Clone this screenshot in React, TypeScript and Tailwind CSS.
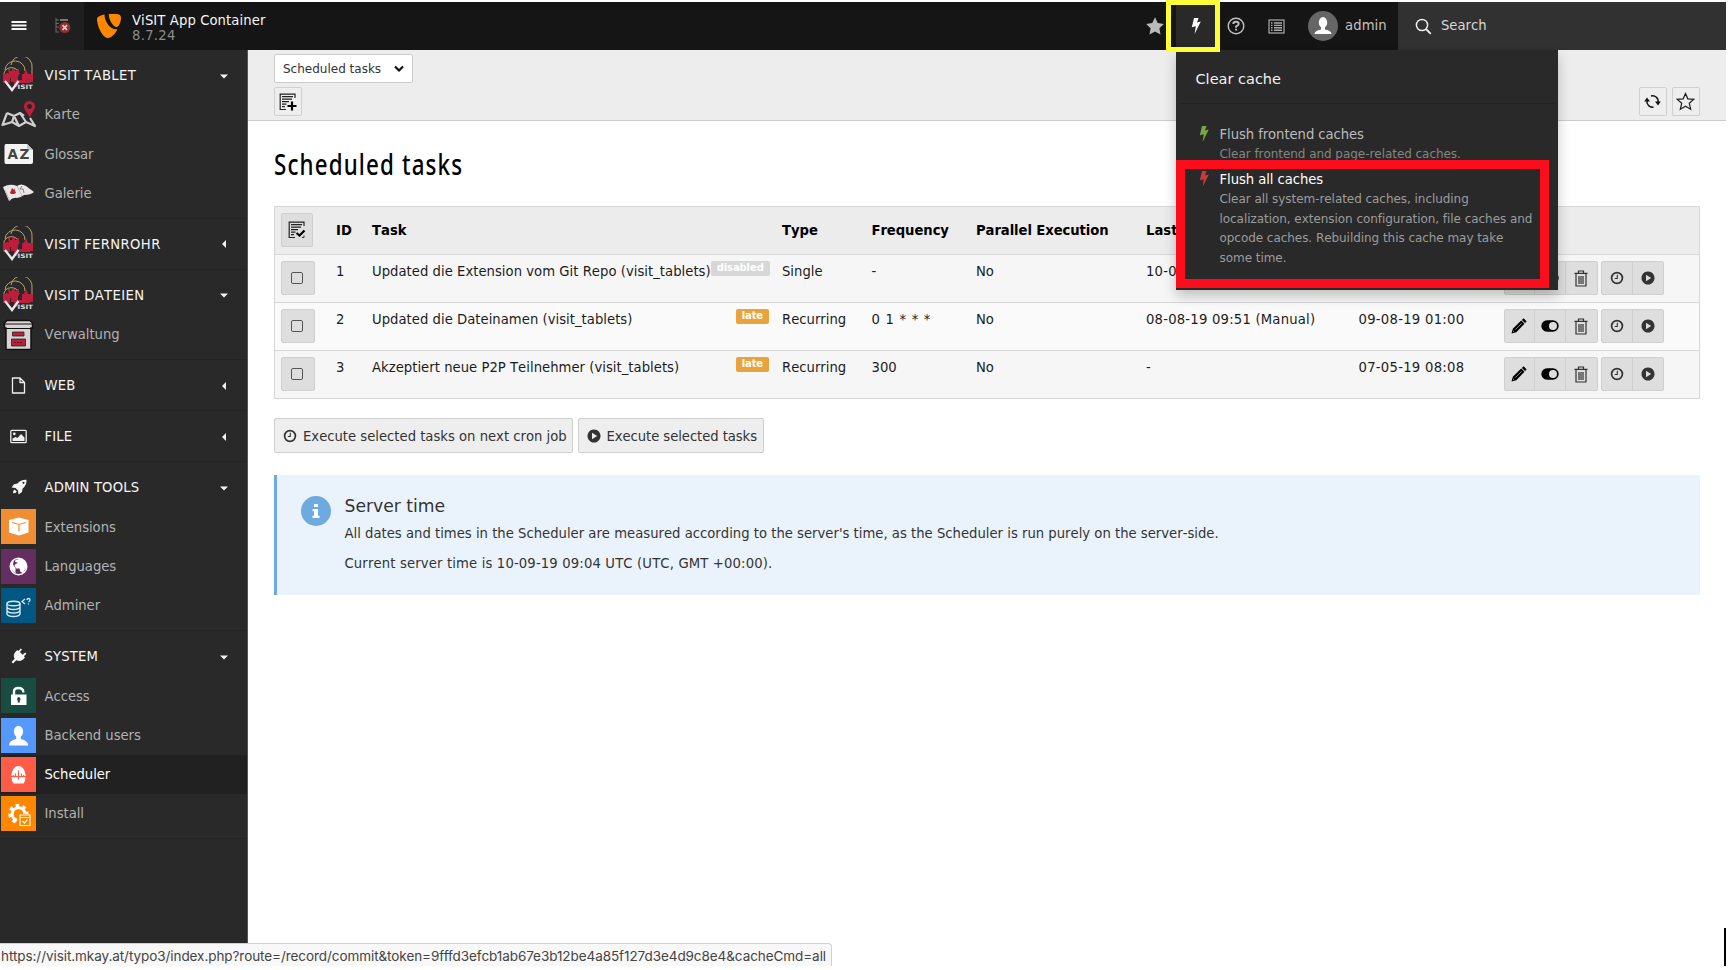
import React from "react";

type IconProps = { className?: string };

const Bolt = ({ className }: IconProps) => (
  <svg className={className} viewBox="0 0 10 16">
    <path fill="currentColor" d="M3 0H7.600L6 4.400L9.800 3.600L3.600 16L4.800 8.200L.800 9.200Z" />
  </svg>
);

const Typo3Logo = () => (
  <svg className="h-[24px] w-[24px]" viewBox="0 0 24 24">
    <path fill="#ff8700" d="M7.600 .600C3.500 1.300 0 2.800 0 5.200C0 11.500 5.500 24 11 24C14 24 18.500 19.500 20.500 15.200C13.500 16.800 7 7 7.600 .600ZM11.800 0H18.500C22.500 .100 24 1.300 24 3.800C24 8 21.800 13 19.600 13C16 13 11.500 5.500 11.800 0Z" />
  </svg>
);

const VisitLogo = () => (
  <svg className="ml-[-1px] h-[36px] w-[32px]" viewBox="0 0 32 36">
    <g fill="none" stroke="#b9a468" strokeWidth="1">
      <path d="M1.500 18A8 9 0 0 1 17 17" />
      <path d="M3 13A10 9.500 0 0 1 23 14" />
      <path d="M9 8A10.500 10.500 0 0 1 30 11V20" />
    </g>
    <path fill="#be1e3c" d="M6 12h2v2h2v-2h3v2h2v-2h2v6l-1 1v4h4v-3l2-3l2-5l2 5l2 1v8H16v4h-4v-5H9v-4H6v3l-5-2v-6l1 1h2v-1h2l1 1z" />
    <path fill="#be1e3c" d="M1 19l2 1h2v-1h3v7H1zM20 17h11v8H20z" />
    <path fill="none" stroke="#e8e8e8" strokeWidth="2.300" d="M3 24L10 33L16.500 24" />
    <text x="15.500" y="32" fill="#dedede" fontSize="6" fontWeight="700" fontFamily="DejaVu Sans, sans-serif" textLength="15.500" lengthAdjust="spacingAndGlyphs">ISIT</text>
  </svg>
);

const MapIcon = () => (
  <svg className="h-[30px] w-[35px]" viewBox="0 0 35 30">
    <path d="M6 13L1.500 25L11 22L18 26L25 22L34 26L29 18M6 13L13 16L19 13L23 16M13 16L11 22M13 16L18 26M19 13L25 22" fill="none" stroke="#cfcfcf" strokeWidth="2.200" strokeLinejoin="round" />
    <path fill="#be1e3c" fillRule="evenodd" d="M28.500 1A5.500 5.500 0 0 1 34 6.500C34 10 30 13 29.200 18C26.500 13 23 10 23 6.500A5.500 5.500 0 0 1 28.500 1ZM28.500 4a2.500 2.500 0 1 0 .01 0Z" />
  </svg>
);

const GlossaryIcon = () => (
  <svg className="h-[22px] w-[30px]" viewBox="0 0 30 22">
    <path fill="#f4f4f4" d="M2 1H23L29 7V19Q29 21 27 21H2Q.500 21 .500 19V3Q.500 1 2 1Z" />
    <path fill="#c9c9c9" d="M23 1L29 7H23Z" />
    <text x="3.500" y="16" fontSize="13.500" fontWeight="700" fill="#444" fontFamily="DejaVu Sans, sans-serif" letterSpacing="1.500">AZ</text>
  </svg>
);

const GalleryIcon = () => (
  <svg className="h-[20px] w-[33px]" viewBox="0 0 33 20">
    <path fill="#ece7e7" d="M1 4Q8 0 15 3Q19 0 24 3L32 9Q29 12 22 12Q18 15 15 15Q11 14 7 18Z" />
    <path fill="none" stroke="#b5aeae" strokeWidth=".8" d="M15 3L20 13M3 7L8 18" />
    <path fill="#be1e3c" d="M8 10L10 5L12 7V5L14 10L12 11H9Z" />
    <path fill="none" stroke="#777" strokeWidth=".9" d="M20 3l-2 3l3 0l1 4" />
  </svg>
);

const ArchiveIcon = () => (
  <svg className="h-[32px] w-[31px]" viewBox="0 0 31 32">
    <path fill="#d8d4d4" stroke="#111" strokeWidth="1.500" d="M4 1.500H27L29.500 4V9H28V29.500Q28 30.500 27 30.500H4Q3 30.500 3 29.500V9H1.500V4Z" />
    <path stroke="#111" strokeWidth="1.200" d="M2 5H29M3 9.500H28" />
    <path fill="#be1e3c" stroke="#222" strokeWidth=".8" d="M9.500 13H21V17H9.500ZM8.500 20H22.500V27H8.500Z" />
    <path stroke="#4d1220" strokeWidth="1.200" strokeDasharray="2 1" d="M11 23.500H20" />
  </svg>
);

const PageIcon = () => (
  <svg className="h-[17px] w-[15px]" viewBox="0 0 15 17">
    <path fill="none" stroke="#efefef" strokeWidth="1.300" strokeLinejoin="round" d="M1.500 1H9L13.500 5.500V16H1.500ZM9 1V5.500H13.500" />
  </svg>
);

const ImageIcon = () => (
  <svg className="h-[15px] w-[17px]" viewBox="0 0 17 15">
    <rect x=".8" y="1.300" width="15.400" height="12.400" rx="1" fill="none" stroke="#efefef" strokeWidth="1.300" />
    <circle cx="4.300" cy="4.800" r="1.400" fill="#efefef" />
    <path fill="#efefef" d="M2.500 12V9.500L5.500 8L7.500 9L11 5L14.500 8.500V12Z" />
  </svg>
);

const RocketIcon = () => (
  <svg className="h-[16px] w-[16px]" viewBox="0 0 16 16">
    <path fill="#f4f4f4" fillRule="evenodd" d="M15.500.800C15.500 5 14.500 7 11.500 9.800L11 13L7.500 15.500L7 11.500L4.500 9L.500 8.500L3 5.200L6.500 4.600C9 1.600 11.500.600 15.500.800ZM12.500 2.700a1 1 0 1 0 .01 0ZM3.500 10.500L5.800 12.500L4.500 14L2 14.300L2.300 12Z" />
  </svg>
);

const PlugIcon = () => (
  <svg className="h-[16px] w-[16px]" viewBox="0 0 16 16">
    <path fill="#f4f4f4" d="M9.700.500L11 1.600L8.900 4L11.600 6.800L14.200 4.500L15.400 5.800L12.900 8.200L14 9.300C11.500 13 8.500 14 5.300 12.300L2 15.500L.500 14L3.700 10.800C2 7.800 3 4.500 6.500 2L7.600 3Z" />
  </svg>
);

const tiles: Record<string, React.ReactNode> = {
  box: (
    <>
      <path fill="#fff" d="M18 8.500L27.500 11V23.500L18 26.500L8 23.500V11Z" />
      <path fill="none" stroke="#f18e33" strokeWidth="1.200" d="M11 13.500L18 15.500L25 13.500M18 15.500V22.500" />
    </>
  ),
  globe: (
    <>
      <circle cx="17.500" cy="17.500" r="8.300" fill="none" stroke="#fff" strokeWidth="1.400" />
      <path fill="#fff" d="M14.500 11L20 9.500L24.500 13L25.500 18L22 24L19.500 23L18.500 19.500H15L13.500 16L17 13.500L14 13ZM9.500 14L13 10L12 15.500L14.500 19V24.500L10 20.500Z" />
    </>
  ),
  database: (
    <>
      <g fill="none" stroke="#dbe9f2" strokeWidth="1.400">
        <ellipse cx="12.500" cy="15.500" rx="6.500" ry="2.300" />
        <path d="M6 15.500V26Q7 28.500 12.500 28.500T19 26V15.500M6 19Q7 21.500 12.500 21.500T19 19M6 22.500Q7 25 12.500 25T19 22.500" />
        <path d="M24 11L21 13.500L24 16M26 12Q26 10.500 27.500 10.500T29 12Q29 13 27.500 14M27.500 15.500V16.500" strokeWidth="1.300" />
      </g>
    </>
  ),
  lock: (
    <>
      <path fill="none" stroke="#fff" strokeWidth="2.400" d="M13 17V13.500Q13 10 17.500 10T22.300 13.800V14.500" />
      <path fill="#fff" fillRule="evenodd" d="M10 16.500H25.500V27H10ZM17.800 19A2 2 0 0 0 16.800 22.500V24.500H18.800V22.500A2 2 0 0 0 17.800 19Z" />
    </>
  ),
  user: (
    <>
      <ellipse cx="17.500" cy="13.500" rx="4.600" ry="5.800" fill="#fff" />
      <path fill="#fff" d="M15.200 17H19.800V21Q27 22.500 27.200 27.500H8Q8 22.500 15.200 21Z" />
    </>
  ),
  scheduler: (
    <>
      <path fill="#fff" d="M10.500 17.500Q12 9 17.500 9T24.500 17.500L24.500 19H10.500ZM10.500 20.300H24.500Q24.500 24 22.500 26.500H12.500Q10.500 24 10.500 20.300Z" />
      <path stroke="#ff5c48" strokeWidth="1.100" d="M17.500 13.500V22.500M14.500 16.500V19M20.500 16.500V19M12.300 18V19M22.700 18V19" />
    </>
  ),
  gear: (
    <>
      <path fill="none" stroke="#fff" strokeWidth="3" d="M16 24.200A6.300 6.300 0 1 1 23.800 17.500" />
      <path fill="none" stroke="#fff" strokeWidth="3" strokeDasharray="3.600 3.400" d="M14.500 26A8.600 8.600 0 1 1 26 18" />
      <path fill="#ff8700" stroke="#fff" strokeWidth="1.100" d="M19 19H29V29.500H19Z" />
      <path fill="none" stroke="#fff" strokeWidth="1.200" d="M19 21.500H29M21.500 25L23.500 27L26.500 23.500" />
    </>
  ),
};

const Tile = ({ kind, color }: { kind: string; color: string }) => (
  <svg className={"h-[35px] w-[35px] " + color} viewBox="0 0 35 35">
    {tiles[kind]}
  </svg>
);

const ClockIcon = () => (
  <svg className="h-[14px] w-[14px]" viewBox="0 0 14 14">
    <circle cx="7" cy="7" r="5.400" fill="none" stroke="#333" strokeWidth="1.700" />
    <path d="M7.300 3.800V7.500H4.800" fill="none" stroke="#333" strokeWidth="1.100" />
  </svg>
);

const PlayIcon = () => (
  <svg className="h-[14px] w-[14px]" viewBox="0 0 14 14">
    <path fill="#333" fillRule="evenodd" d="M7 .500A6.500 6.500 0 1 0 7.010 .500ZM5 3.800L10.200 7L5 10.200Z" />
  </svg>
);

const PencilIcon = () => (
  <svg className="h-[16px] w-[16px]" viewBox="0 0 16 16">
    <path fill="#000" d="M12.600.300L15.700 3.400L14 5.100L10.900 2ZM10.200 2.500L13.500 5.800L5.300 14.200L.500 15.500L1.800 10.800Z" />
    <path d="M4.300 11.700L10.800 5.200M2 13L3 14" stroke="#dedede" strokeWidth=".6" />
  </svg>
);

const ToggleIcon = () => (
  <svg className="h-[12px] w-[18px]" viewBox="0 0 18 12">
    <rect x=".3" y=".3" width="17.400" height="11.400" rx="5.700" fill="#000" />
    <circle cx="12" cy="6" r="4" fill="#dedede" />
  </svg>
);

const TrashIcon = () => (
  <svg className="h-[17px] w-[14px]" viewBox="0 0 14 17">
    <path fill="none" stroke="#333" strokeWidth="1.200" d="M.500 3.300H13.500M4.500 3V1H9.500V3M2 3V16H12V3M5 6V14M7 6V14M9 6V14" />
  </svg>
);

const DocLines = () => (
  <path fill="none" stroke="#222" strokeWidth="1.200" d="M16 5V1.200H1.200V16.500H7M3 3.700H14M3 6.200H13M3 8.700H10M3 11.200H7.500M3 13.700H6" />
);

const NewDocIcon = () => (
  <svg className="h-[18px] w-[18px]" viewBox="0 0 18 18">
    <DocLines />
    <path stroke="#000" strokeWidth="2.200" d="M8.500 13H17.500M13 8.500V17.500" />
  </svg>
);

const SelectDocIcon = () => (
  <svg className="h-[18px] w-[18px]" viewBox="0 0 18 18">
    <DocLines />
    <path fill="none" stroke="#000" strokeWidth="2.200" d="M8.500 12L11.500 14.500L16.500 9.500" />
    <path fill="none" stroke="#333" strokeWidth="1" d="M14 16.500H16V14.500" />
  </svg>
);

const Group = ({ icon, label, open, children }: { icon: React.ReactNode; label: string; open?: boolean; children?: React.ReactNode }) => (
  <section className="shrink-0 border-b border-[#232323] pb-[5px]">
    <div className="flex h-[45px] items-center pt-[5px]">
      <div className="flex w-[37px] shrink-0 items-center justify-center">{icon}</div>
      <div className={"ml-[7.500px] w-[170px] pt-[2px] text-[13.200px] text-[#f5f5f5] " + (label.startsWith("VISIT") ? "tracking-[0.370px]" : "tracking-[0.150px]")}>{label}</div>
      <svg className="mt-[1px] h-[10px] w-[18px]" viewBox="0 0 18 10">
        <path fill="#f2f2f2" d={open ? "M5 3.500H13L9 7.500Z" : "M11 1V9L7 5Z"} />
      </svg>
    </div>
    {children}
  </section>
);

const Item = ({ icon, label, active }: { icon: React.ReactNode; label: string; active?: boolean }) => (
  <div className={"flex h-[39.300px] items-center " + (active ? "bg-[#212121] text-white" : "text-[#b2b2b2]")}>
    <div className="flex w-[37px] shrink-0 items-center justify-center">{icon}</div>
    <div className="ml-[7.500px] pt-[1.400px] text-[13.200px] tracking-[-0.03px]">{label}</div>
  </div>
);

const cols = "grid grid-cols-[6px_55px_36px_410px_89.5px_104.5px_170px_212.5px_145px_1fr]";

const ActionGroup = ({ icons }: { icons: React.ReactNode[] }) => (
  <div className="flex h-[34px] divide-x divide-[#cfcfcf] rounded-[2px] border border-[#cfcfcf] bg-[#dedede]">
    {icons.map((icon, i) => (
      <div key={i} className="flex w-[30.700px] items-center justify-center">{icon}</div>
    ))}
  </div>
);

type Task = { id: number; name: string; badge: string; type: string; freq: string; last: string; next: string };

const tasks: Task[] = [
  { id: 1, name: "Updated die Extension vom Git Repo (visit_tablets)", badge: "disabled", type: "Single", freq: "-", last: "10-09-19", next: "" },
  { id: 2, name: "Updated die Dateinamen (visit_tablets)", badge: "late", type: "Recurring", freq: "0 1 * * *", last: "08-08-19 09:51 (Manual)", next: "09-08-19 01:00" },
  { id: 3, name: "Akzeptiert neue P2P Teilnehmer (visit_tablets)", badge: "late", type: "Recurring", freq: "300", last: "-", next: "07-05-19 08:08" },
];

const Row = ({ task }: { task: Task }) => (
  <div className={cols + " h-[48.100px] border-t border-[#d7d7d7] pt-[6px] leading-[22px] text-[#1c1c1c] " + (task.id === 2 ? "bg-[#fafafa]" : "bg-[#f6f6f6]")}>
    <div />
    <div>
      <div className="flex h-[34px] w-[34px] items-center justify-center rounded-[2px] border border-[#cfcfcf] bg-[#dedede]">
        <div className="mr-[2px] h-[12px] w-[12px] rounded-[2px] border-[1.500px] border-[#555]" />
      </div>
    </div>
    <div>{task.id}</div>
    <div className="flex items-start justify-between whitespace-nowrap pr-[13px]">
      <span className="tracking-[0.030px]">{task.name}</span>
      <span className={"flex h-[14.500px] shrink-0 items-center rounded-[2px] px-[6px] text-[10px] font-bold leading-[14px] tracking-[-0.1px] text-white " + (task.badge === "late" ? "bg-[#e8a33d]" : "bg-[#d7d7d7]")}>{task.badge}</span>
    </div>
    <div>{task.type}</div>
    <div className={task.id === 2 ? "tracking-[0.700px]" : ""}>{task.freq}</div>
    <div>No</div>
    <div className="whitespace-nowrap tracking-[0.210px]">{task.last}</div>
    <div className="whitespace-nowrap tracking-[0.270px]">{task.next}</div>
    <div className="flex gap-[3.500px]">
      <ActionGroup icons={[<PencilIcon />, <ToggleIcon />, <TrashIcon />]} />
      <ActionGroup icons={[<ClockIcon />, <PlayIcon />]} />
    </div>
  </div>
);

const TopBar = () => (
  <header className="flex h-[48px] w-[1726px] bg-[#151515] text-[13.200px]">
    <div className="flex w-[40px] items-center justify-center bg-[#292929]">
      <svg className="ml-[-3px] h-[12px] w-[16px]" viewBox="0 0 16 12">
        <path stroke="#f5f5f5" strokeWidth="2.200" d="M.500 2H15.500M.500 5.500H15.500M.500 9H15.500" />
      </svg>
    </div>
    <div className="flex w-[44px] items-center justify-center bg-[#1f1f1f]">
      <svg className="h-[16px] w-[17px]" viewBox="0 0 17 16">
        <path fill="none" stroke="#666" strokeWidth="1.100" d="M2 0V14H5M2 2H5M2 5.500H5M2 9H5" />
        <path stroke="#777" strokeWidth="2" d="M6 2H14" />
        <circle cx="10.800" cy="9.500" r="5.600" fill="#8f2f30" />
        <path stroke="#e2c8c8" strokeWidth="1.700" d="M8.500 7.200L13 11.800M13 7.200L8.500 11.800" />
      </svg>
    </div>
    <div className="flex w-[1058px] items-center pl-[13px]">
      <Typo3Logo />
      <div className="ml-[11px] pt-[3px] leading-[15px]">
        <div className="tracking-[0.1px] text-[#f5f5f5]">ViSIT App Container</div>
        <div className="tracking-[0.3px] text-[#8c8c8c]">8.7.24</div>
      </div>
    </div>
    <div className="flex w-[34px] items-center">
      <svg className="ml-[4px] h-[18px] w-[18px]" viewBox="0 0 18 18">
        <path fill="#bbb" d="M9 .300L11.700 6L17.800 6.900L13.400 11.300L14.500 17.600L9 14.600L3.500 17.600L4.600 11.300L.200 6.900L6.300 6Z" />
      </svg>
    </div>
    <div className="flex w-[39px] items-center justify-center bg-[#292929]">
      <Bolt className="h-[16px] w-[10px] text-white" />
    </div>
    <div className="flex w-[41px] items-center justify-center">
      <svg className="h-[18px] w-[18px]" viewBox="0 0 18 18">
        <circle cx="9" cy="9" r="7.800" fill="none" stroke="#c0c0c0" strokeWidth="1.400" />
        <path fill="none" stroke="#c0c0c0" strokeWidth="1.900" d="M6.300 7Q6.300 4.800 9 4.800T11.700 7Q11.700 8.300 9.100 9.300V10.700M9.100 11.800V13.600" />
      </svg>
    </div>
    <div className="flex w-[40px] items-center justify-center">
      <svg className="h-[15px] w-[17px]" viewBox="0 0 17 15">
        <rect x="1" y="1" width="15" height="13" fill="none" stroke="#aaa" strokeWidth="1.200" />
        <path stroke="#aaa" strokeWidth="1.400" d="M3 4H4.500M6 4H14M3 6.400H4.500M6 6.400H14M3 8.800H4.500M6 8.800H14M3 11.200H4.500M6 11.200H14" />
      </svg>
    </div>
    <div className="flex w-[102px] items-center pl-[12px]">
      <svg className="h-[30px] w-[30px]" viewBox="0 0 30 30">
        <circle cx="15" cy="15" r="15" fill="#666" />
        <ellipse cx="15" cy="11.500" rx="4.200" ry="5.400" fill="#fff" />
        <path fill="#fff" d="M13 15H17V18.500Q23.500 19.500 23.500 23H6.500Q6.500 19.500 13 18.500Z" />
      </svg>
      <span className="ml-[7px] tracking-[0.1px] text-[#c3c3c3]">admin</span>
    </div>
    <div className="flex flex-1 items-center bg-[#313131] pl-[17px]">
      <svg className="h-[17px] w-[17px]" viewBox="0 0 17 17">
        <circle cx="7" cy="7" r="5.600" fill="none" stroke="#eee" strokeWidth="1.500" />
        <path stroke="#eee" strokeWidth="1.800" d="M11 11L15.800 15.800" />
      </svg>
      <span className="ml-[9px] text-[#d8d8d8]">Search</span>
    </div>
  </header>
);

const SmallButton = ({ children }: { children: React.ReactNode }) => (
  <div className="flex h-[29px] w-[28px] items-center justify-center rounded-[2px] border border-[#d0d0d0] bg-[#eee]">{children}</div>
);

const Content = () => (
  <main className="flex w-[1478px] flex-col">
    <div className="flex h-[71px] justify-between border-b border-[#ccc] bg-[#ededed] pl-[26px] pr-[26.500px] pt-[4px]">
      <div className="flex flex-col gap-[4px]">
        <div className="flex h-[29px] w-[138.500px] items-center justify-between rounded-[2px] border border-[#ccc] bg-white pl-[8px] pr-[8px] text-[12px] text-[#333]">
          <span className="pt-[1px]">Scheduled tasks</span>
          <svg className="h-[8px] w-[10px]" viewBox="0 0 10 8">
            <path fill="none" stroke="#111" strokeWidth="2.200" d="M1 1.500L5 5.500L9 1.500" />
          </svg>
        </div>
        <SmallButton><NewDocIcon /></SmallButton>
      </div>
      <div className="mt-[33px] flex gap-[5px]">
        <SmallButton>
          <svg className="h-[15px] w-[17px]" viewBox="0 0 17 15">
            <path fill="none" stroke="#111" strokeWidth="1.500" d="M9.500 13A5.500 5.500 0 0 1 3 6.500M7 2A5.500 5.500 0 0 1 14 8.500" />
            <path fill="#111" d="M.200 7.500L3 3.500L6 7.500ZM16.800 7.500L14 11.500L11 7.500Z" />
          </svg>
        </SmallButton>
        <SmallButton>
          <svg className="h-[19px] w-[19px]" viewBox="0 0 18 18">
            <path fill="none" stroke="#222" strokeWidth="1.200" d="M9 1.500L11.200 6.500L16.800 7L12.600 10.700L13.900 16.300L9 13.400L4.100 16.300L5.400 10.700L1.200 7L6.800 6.500Z" />
          </svg>
        </SmallButton>
      </div>
    </div>

    <div className="flex flex-col pl-[26px] pr-[26px]">
      <h1 className="mt-[21px] h-[44px] w-[260px] origin-left scale-x-[0.77] whitespace-nowrap font-['Noto_Sans'] text-[29px] font-medium leading-[44px] tracking-[1.500px] text-black">Scheduled tasks</h1>

      <div className="mt-[19.500px] w-[1426px] border border-[#d7d7d7] text-[13.200px]">
        <div className={cols + " h-[47.500px] items-center bg-[#ececec] font-bold text-black"}>
          <div />
          <div>
            <div className="flex h-[34px] w-[32px] items-center justify-center rounded-[2px] border border-[#cfcfcf] bg-[#dedede]"><SelectDocIcon /></div>
          </div>
          <div className="pt-[2px]">ID</div>
          <div className="pt-[2px]">Task</div>
          <div className="pt-[2px]">Type</div>
          <div className="pt-[2px] tracking-[-0.070px]">Frequency</div>
          <div className="pt-[2px] tracking-[-0.080px]">Parallel Execution</div>
          <div className="pt-[2px]">Last</div>
        </div>
        {tasks.map((t) => <Row key={t.id} task={t} />)}
      </div>

      <div className="mt-[19px] flex gap-[4.500px] text-[13.200px] text-[#333]">
        <div className="flex h-[34.500px] w-[299px] items-center whitespace-nowrap rounded-[2px] border border-[#cfcfcf] bg-[#eee] pl-[8px]">
          <ClockIcon /><span className="ml-[6px] pt-[2px]">Execute selected tasks on next cron job</span>
        </div>
        <div className="flex h-[34.500px] w-[186px] items-center whitespace-nowrap rounded-[2px] border border-[#cfcfcf] bg-[#eee] pl-[8px]">
          <PlayIcon /><span className="ml-[6px] pt-[2px] tracking-[-0.060px]">Execute selected tasks</span>
        </div>
      </div>

      <div className="mt-[22.500px] flex h-[120px] w-[1426px] border-l-[3px] border-[#6daae0] bg-[#eaf3fb] text-[#333]">
        <div className="ml-[24px] mt-[21px] flex h-[30px] w-[30px] shrink-0 items-center justify-center rounded-full bg-[#6daae0]">
          <svg className="h-[14px] w-[8px]" viewBox="0 0 8 14">
            <path fill="#fff" d="M2 0H6V3H2ZM.500 5H6V11.800H7.500V14H.500V11.800H2V7.200H.500Z" />
          </svg>
        </div>
        <div className="ml-[13.500px] pt-[19px]">
          <div className="text-[17.200px] leading-[24px]">Server time</div>
          <p className="mt-[6px] text-[13.200px] leading-[20px] tracking-[0.010px]">All dates and times in the Scheduler are measured according to the server's time, as the Scheduler is run purely on the server-side.</p>
          <p className="mt-[9.500px] text-[13.200px] leading-[20px] tracking-[0.150px]">Current server time is 10-09-19 09:04 UTC (UTC, GMT +00:00).</p>
        </div>
      </div>
    </div>
  </main>
);

const CacheMenu = () => (
  <div className="absolute left-[1176px] top-[50px] h-[240px] w-[382px] bg-[#292929] shadow-[0_6px_12px_rgba(0,0,0,0.22)]">
    <div className="mx-[3px] h-[53.500px] border-b border-[#222] pl-[16.500px] pt-[16.500px] text-[14.500px] leading-[24px] text-[#f2f2f2]">Clear cache</div>
    <div className="mt-[21px] flex">
      <Bolt className="ml-[23px] mt-[1px] h-[16px] w-[10px] text-[#79a548]" />
      <div className="ml-[10.500px] whitespace-nowrap">
        <div className="text-[13.200px] leading-[20px] tracking-[-0.060px] text-[#bcbcbc]">Flush frontend caches</div>
        <div className="text-[12px] leading-[19.500px] tracking-[-0.050px] text-[#858585]">Clear frontend and page-related caches.</div>
      </div>
    </div>
    <div className="mt-[6px] flex">
      <Bolt className="ml-[23px] mt-[1px] h-[16px] w-[10px] text-[#c83c3c]" />
      <div className="ml-[10.500px] whitespace-nowrap">
        <div className="text-[13.200px] leading-[20px] tracking-[-0.060px] text-white">Flush all caches</div>
        <div className="text-[12px] leading-[19.500px] tracking-[-0.050px] text-[#9c9c9c]">
          Clear all system-related caches, including<br />
          localization, extension configuration, file caches and<br />
          opcode caches. Rebuilding this cache may take<br />
          some time.
        </div>
      </div>
    </div>
  </div>
);

export default function App() {
  return (
    <div className="relative h-[970px] w-[1728px] overflow-hidden bg-white pt-[2px] font-['DejaVu_Sans',Verdana,sans-serif] [font-kerning:none]">
      <TopBar />
      <div className="flex h-[893px]">
        <nav className="flex w-[248px] shrink-0 flex-col border-r border-[#555] bg-[#292929]">
          <Group icon={<VisitLogo />} label="VISIT TABLET" open>
            <Item icon={<MapIcon />} label="Karte" />
            <Item icon={<GlossaryIcon />} label="Glossar" />
            <Item icon={<GalleryIcon />} label="Galerie" />
          </Group>
          <Group icon={<VisitLogo />} label="VISIT FERNROHR" />
          <Group icon={<VisitLogo />} label="VISIT DATEIEN" open>
            <Item icon={<ArchiveIcon />} label="Verwaltung" />
          </Group>
          <Group icon={<PageIcon />} label="WEB" />
          <Group icon={<ImageIcon />} label="FILE" />
          <Group icon={<RocketIcon />} label="ADMIN TOOLS" open>
            <Item icon={<Tile kind="box" color="bg-[#f18e33]" />} label="Extensions" />
            <Item icon={<Tile kind="globe" color="bg-[#642f60]" />} label="Languages" />
            <Item icon={<Tile kind="database" color="bg-[#005784]" />} label="Adminer" />
          </Group>
          <Group icon={<PlugIcon />} label="SYSTEM" open>
            <Item icon={<Tile kind="lock" color="bg-[#194d41]" />} label="Access" />
            <Item icon={<Tile kind="user" color="bg-[#5599ff]" />} label="Backend users" />
            <Item icon={<Tile kind="scheduler" color="bg-[#ff5c48]" />} label="Scheduler" active />
            <Item icon={<Tile kind="gear" color="bg-[#ff8700]" />} label="Install" />
          </Group>
        </nav>
        <Content />
      </div>
      <footer className="flex h-[23px] w-[832px] items-center whitespace-nowrap rounded-tr-[4px] border-r border-t border-[#d0d0d0] bg-[#f8f8f8] pl-[1px] pt-[2px] font-['Inter',sans-serif] text-[13.500px] tracking-[-0.070px] text-[#444] [font-kerning:normal]">
        https://visit.mkay.at/typo3/index.php?route=/record/commit&amp;token=9fffd3efcb1ab67e3b12be4a85f127d3e4d9c8e4&amp;cacheCmd=all
      </footer>
      <CacheMenu />
      <div className="absolute left-[1176px] top-[160px] h-[128px] w-[373px] border-[9px] border-[#fc0d1b]" />
      <div className="absolute left-[1166px] top-0 h-[52px] w-[54px] border-[5px] border-[#fffd38]" />
      <div className="absolute left-[1724px] top-[928px] h-[38px] w-[2px] bg-black" />
    </div>
  );
}
